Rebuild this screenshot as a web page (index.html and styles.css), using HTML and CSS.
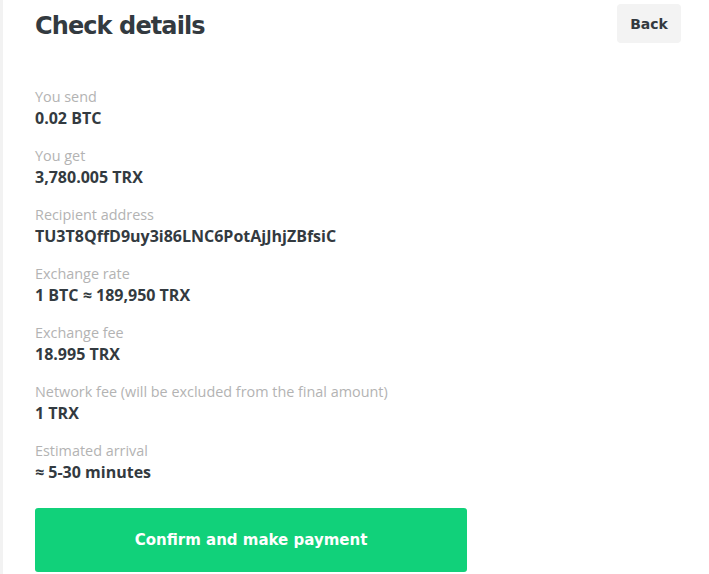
FILE: index.html
```html
<!DOCTYPE html>
<html>
<head>
<meta charset="utf-8">
<link rel="stylesheet" href="styles.css">
</head>
<body>
<div class="page">
  <div class="header">
    <h1 class="title">Check details</h1>
    <button class="back">Back</button>
  </div>
  <div class="fields">
    <div class="field">
      <div class="label">You send</div>
      <div class="value">0.02 BTC</div>
    </div>
    <div class="field">
      <div class="label">You get</div>
      <div class="value">3,780.005 TRX</div>
    </div>
    <div class="field">
      <div class="label">Recipient address</div>
      <div class="value">TU3T8QffD9uy3i86LNC6PotAjJhjZBfsiC</div>
    </div>
    <div class="field">
      <div class="label">Exchange rate</div>
      <div class="value">1 BTC ≈ 189,950 TRX</div>
    </div>
    <div class="field">
      <div class="label">Exchange fee</div>
      <div class="value">18.995 TRX</div>
    </div>
    <div class="field">
      <div class="label">Network fee (will be excluded from the final amount)</div>
      <div class="value">1 TRX</div>
    </div>
    <div class="field">
      <div class="label">Estimated arrival</div>
      <div class="value">≈ 5-30 minutes</div>
    </div>
  </div>
  <button class="confirm">Confirm and make payment</button>
</div>
</body>
</html>
```
FILE: styles.css
```css
html, body {
  margin: 0;
  padding: 0;
  background: #ffffff;
}
body {
  font-family: "Open Sans", "Liberation Sans", sans-serif;
}
.page {
  border-left: 3px solid #f2f2f2;
  min-height: 574px;
  box-sizing: border-box;
  padding: 4px 28px 0 32px;
}
.header {
  display: flex;
  justify-content: space-between;
  align-items: flex-start;
}
.title {
  margin: 7px 0 0 0;
  font-family: "DejaVu Sans", sans-serif;
  font-weight: bold;
  font-size: 24px;
  line-height: 30px;
  letter-spacing: -0.9px;
  color: #333a40;
}
.back {
  width: 64px;
  height: 39px;
  border: none;
  border-radius: 4px;
  background: #f3f3f3;
  font-family: "DejaVu Sans", sans-serif;
  font-weight: 600;
  font-size: 14px;
  color: #333a40;
  padding: 0;
}
.fields {
  display: flex;
  flex-direction: column;
  gap: 17px;
  margin-top: 44px;
}
.label {
  font-size: 14.4px;
  line-height: 20px;
  color: #b3b3b3;
}
.value {
  font-size: 16px;
  line-height: 22px;
  font-weight: bold;
  color: #333a40;
}
.confirm {
  display: block;
  margin-top: 25px;
  width: 432px;
  height: 64px;
  border: none;
  border-radius: 3px;
  background: #11d17a;
  color: #ffffff;
  font-family: "DejaVu Sans", sans-serif;
  font-weight: bold;
  font-size: 15px;
  padding: 0;
}
```
